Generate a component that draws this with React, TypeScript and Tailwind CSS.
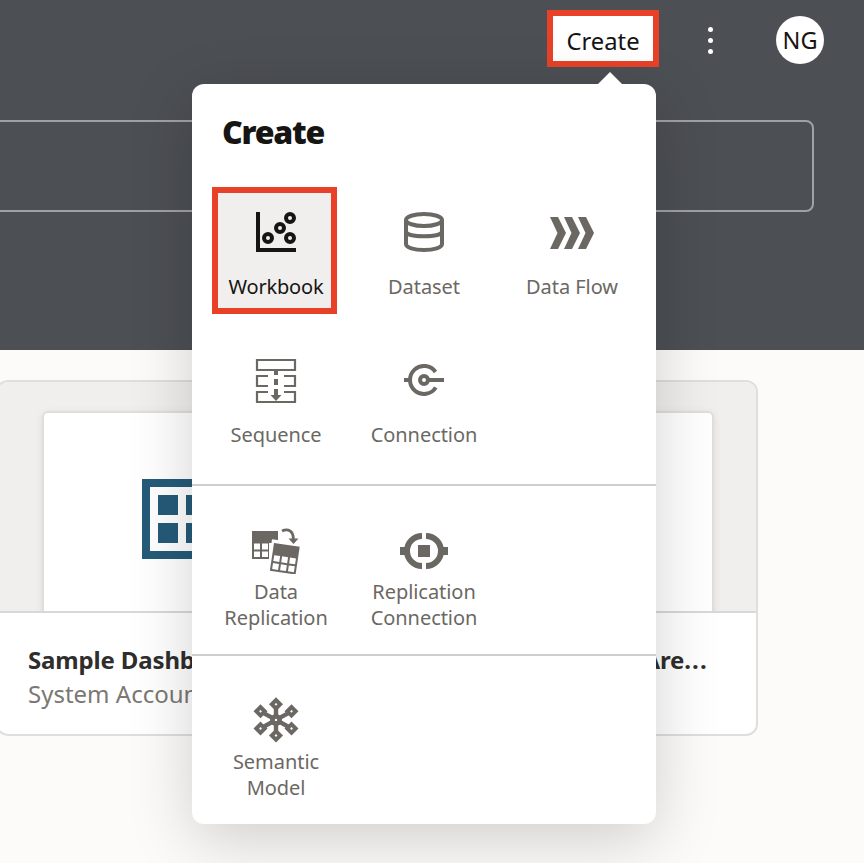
import type { ReactNode } from "react";

function Icon({ children }: { children: ReactNode }) {
  return (
    <svg width="48" height="48" viewBox="0 0 48 48" fill="none" stroke="currentColor" className="block shrink-0">
      {children}
    </svg>
  );
}

const WorkbookIcon = () => (
  <Icon>
    <path d="M6 4v38h38" strokeWidth="4" />
    <g strokeWidth="4">
      <circle cx="16" cy="30" r="4" />
      <circle cx="28" cy="20" r="4" />
      <circle cx="38" cy="10" r="4" />
      <circle cx="38" cy="30" r="4" />
    </g>
  </Icon>
);

const DatasetIcon = () => (
  <Icon>
    <ellipse cx="24" cy="12" rx="18" ry="6" strokeWidth="4" />
    <path d="M6 12v24c0 3.4 8 6 18 6s18-2.600 18-6V12" strokeWidth="4" />
    <path d="M6 24c1 2.600 8 4.300 18 4.300S41 26.600 42 24" strokeWidth="4" />
  </Icon>
);

const DataFlowIcon = () => (
  <Icon>
    <g fill="currentColor" stroke="none">
      <path d="M2 9h8l8 16-8 16H2l7.500-16z" />
      <path d="M16 9h8l8 16-8 16h-8l7.500-16z" />
      <path d="M30 9h8l8 16-8 16h-8l7.500-16z" />
    </g>
  </Icon>
);

const SequenceIcon = () => (
  <Icon>
    <path d="M5 4h38v10H5zM16 20H5v10h11M32 20h11v10H32M16 36H5v10h38V36H32" strokeWidth="2.200" />
    <path d="M24 15v4M24 23v6M24 33v7" strokeWidth="4" />
    <path d="M18.500 39h11L24 45z" fill="currentColor" stroke="none" />
  </Icon>
);

const ConnectionIcon = () => (
  <Icon>
    <path d="M35.500 16A14 14 0 1 0 35.800 31.500" strokeWidth="4" />
    <circle cx="24" cy="24" r="4" strokeWidth="4" />
    <path d="M4 24h5M29 24h15" strokeWidth="4" />
  </Icon>
);

const DataReplicationIcon = () => (
  <Icon>
    <g stroke="none" fill="currentColor">
      <path d="M0 5h26v12h-9v16H0z" />
      <path d="M2 17.500h6v6H2zM10 17.500h6v6h-6zM2 25.500h6v5.500H2zM10 25.500h6v5.500h-6z" fill="#fff" />
      <g transform="translate(22 17) rotate(8.500)">
        <path d="M-2.500-3.500h30v33h-30z" fill="#fff" />
        <path d="M0 0h26v28H0z" />
        <path
          d="M2 12h6v6H2zM10 12h6v6h-6zM18 12h6v6h-6zM2 20h6v6H2zM10 20h6v6h-6zM18 20h6v6h-6z"
          fill="#fff"
        />
      </g>
      <path d="M36.500 12.500h10L41.500 18z" />
    </g>
    <path d="M30 5C36 2 41.500 5 41.300 13" strokeWidth="2.800" />
  </Icon>
);

const ReplicationConnectionIcon = () => (
  <Icon>
    <path d="M22 10a15 15 0 0 0 0 30M26 10a15 15 0 0 1 0 30" strokeWidth="6" />
    <path d="M0 21h6v8H0zM42 21h6v8h-6zM18 19h12v12H18z" fill="currentColor" stroke="none" />
  </Icon>
);

const SEMANTIC_NODES = [
  [24, 8.3],
  [24, 39.5],
  [8.5, 15.3],
  [39.5, 15.3],
  [8.5, 32.5],
  [39.5, 32.5],
];

const SemanticIcon = () => (
  <Icon>
    {SEMANTIC_NODES.map(([x, y]) => (
      <g key={`${x}-${y}`}>
        <path d={`M24 23.900L${x} ${y}`} strokeWidth="4.400" />
        <path d={`M${x} ${y - 7}l7 7-7 7-7-7z`} fill="currentColor" stroke="none" />
        <path d={`M${x} ${y - 1.4}l1.400 1.400-1.400 1.400-1.400-1.400z`} fill="#fff" stroke="none" />
      </g>
    ))}
    <circle cx="24" cy="23.900" r="6" fill="currentColor" stroke="none" />
    <circle cx="24" cy="23.900" r="1.200" fill="#fff" stroke="none" />
  </Icon>
);

function Tile({ icon, lines, active = false }: { icon: ReactNode; lines: string[]; active?: boolean }) {
  return (
    <button
      className={
        active
          ? "mx-[10px] -mb-px mt-[9px] flex h-[127px] w-[125px] flex-col items-center border-6 border-[#e84128] bg-[#f0efed] pt-[15px] pl-[3px] text-[#161513]"
          : "mx-3 mt-3 flex h-[124px] w-[124px] flex-col items-center pt-[18px] text-[#6b6863]"
      }
    >
      {icon}
      <span
        className={
          active
            ? "mt-[5px] flex h-[52px] shrink-0 flex-col justify-center text-[20px] leading-[26px] tracking-[-0.2px] whitespace-nowrap"
            : "mt-[5px] flex h-[52px] shrink-0 flex-col justify-center text-[20px] leading-[26px] tracking-[-0.05px] whitespace-nowrap"
        }
      >
        {lines.map((line) => (
          <span key={line}>{line}</span>
        ))}
      </span>
    </button>
  );
}

export default function App() {
  return (
    <div className="relative h-[863px] w-[864px] overflow-hidden bg-[#fcfbf9] font-['Noto_Sans',sans-serif]">
      <header className="h-[350px] bg-[#4c4f54]">
        <div className="flex h-[120px] items-start justify-end pr-10">
          <button className="mt-[10px] flex h-[57px] w-[112px] items-center justify-center border-6 border-[#e84128] bg-white pt-[6px] text-[23.800px] text-[#161513]">
            Create
          </button>
          <div className="mt-[27px] ml-[49px] flex w-[5px] flex-col gap-[6px]">
            <i className="size-[5px] rounded-full bg-white" />
            <i className="size-[5px] rounded-full bg-white" />
            <i className="size-[5px] rounded-full bg-white" />
          </div>
          <div className="mt-4 ml-[63px] flex size-12 items-center justify-center rounded-full bg-white pt-[2px] text-[23.500px] text-[#161513]">
            NG
          </div>
        </div>
        <div className="-ml-4 h-[92px] w-[830px] rounded-lg border-2 border-[#9fa1a4]" />
      </header>

      <main className="pt-[30px]">
        <article className="-ml-1 flex h-[356px] w-[762px] flex-col overflow-hidden rounded-[12px] border-2 border-[#dfdedc] bg-white">
          <div className="h-[231px] shrink-0 overflow-hidden border-b-2 border-[#d9d8d6] bg-[#f0efed] pt-[29px] pl-11">
            <div className="h-[220px] w-[672px] rounded-md border-2 border-[#dfdedc] bg-white pt-[66px] pl-[98px] shadow-[0_2px_8px_rgba(0,0,0,0.080)]">
              <div className="grid size-20 grid-cols-2 gap-2 border-8 border-[#255b79] bg-white p-2">
                <i className="bg-[#255b79]" />
                <i className="bg-[#255b79]" />
                <i className="bg-[#255b79]" />
                <i className="bg-[#255b79]" />
              </div>
            </div>
          </div>
          <div className="pt-[30px] pr-[48px] pl-[30px]">
            <div className="flex justify-between text-[24px] leading-[34px] font-bold tracking-[-0.15px] text-[#2f2e2d]">
              <span>Sample Dashboard</span>
              <span>
                Subject <span className="tracking-[-0.2px]">Are</span>
                <span className="tracking-[1.2px]">...</span>
              </span>
            </div>
            <div className="text-[24px] leading-[34px] text-[#7b7772]">System Account</div>
          </div>
        </article>
      </main>

      <section className="absolute top-[84px] left-[192px] h-[740px] w-[464px] rounded-[12px] bg-white shadow-[0_16px_64px_rgba(0,0,0,0.180)]">
        <svg width="24" height="12" viewBox="0 0 24 12" className="absolute -top-3 left-[406px]">
          <path d="M0 12L12 0l12 12z" fill="#fff" />
        </svg>
        <h2 className="h-[94px] pt-[27px] pl-[30px] text-[32px] leading-[42px] font-black tracking-[-1.200px] text-[#161513]">
          Create
        </h2>
        <div className="grid h-[306px] grid-cols-[148px_148px_148px] grid-rows-[148px_148px] px-[10px]">
          <Tile icon={<WorkbookIcon />} lines={["Workbook"]} active />
          <Tile icon={<DatasetIcon />} lines={["Dataset"]} />
          <Tile icon={<DataFlowIcon />} lines={["Data Flow"]} />
          <Tile icon={<SequenceIcon />} lines={["Sequence"]} />
          <Tile icon={<ConnectionIcon />} lines={["Connection"]} />
        </div>
        <div className="grid h-[170px] grid-cols-[148px_148px_148px] border-t-2 border-[#cfcecc] px-[10px] pt-[10px]">
          <Tile icon={<DataReplicationIcon />} lines={["Data", "Replication"]} />
          <Tile icon={<ReplicationConnectionIcon />} lines={["Replication", "Connection"]} />
        </div>
        <div className="grid h-[170px] grid-cols-[148px_148px_148px] border-t-2 border-[#cfcecc] px-[10px] pt-[10px]">
          <Tile icon={<SemanticIcon />} lines={["Semantic", "Model"]} />
        </div>
      </section>
    </div>
  );
}
